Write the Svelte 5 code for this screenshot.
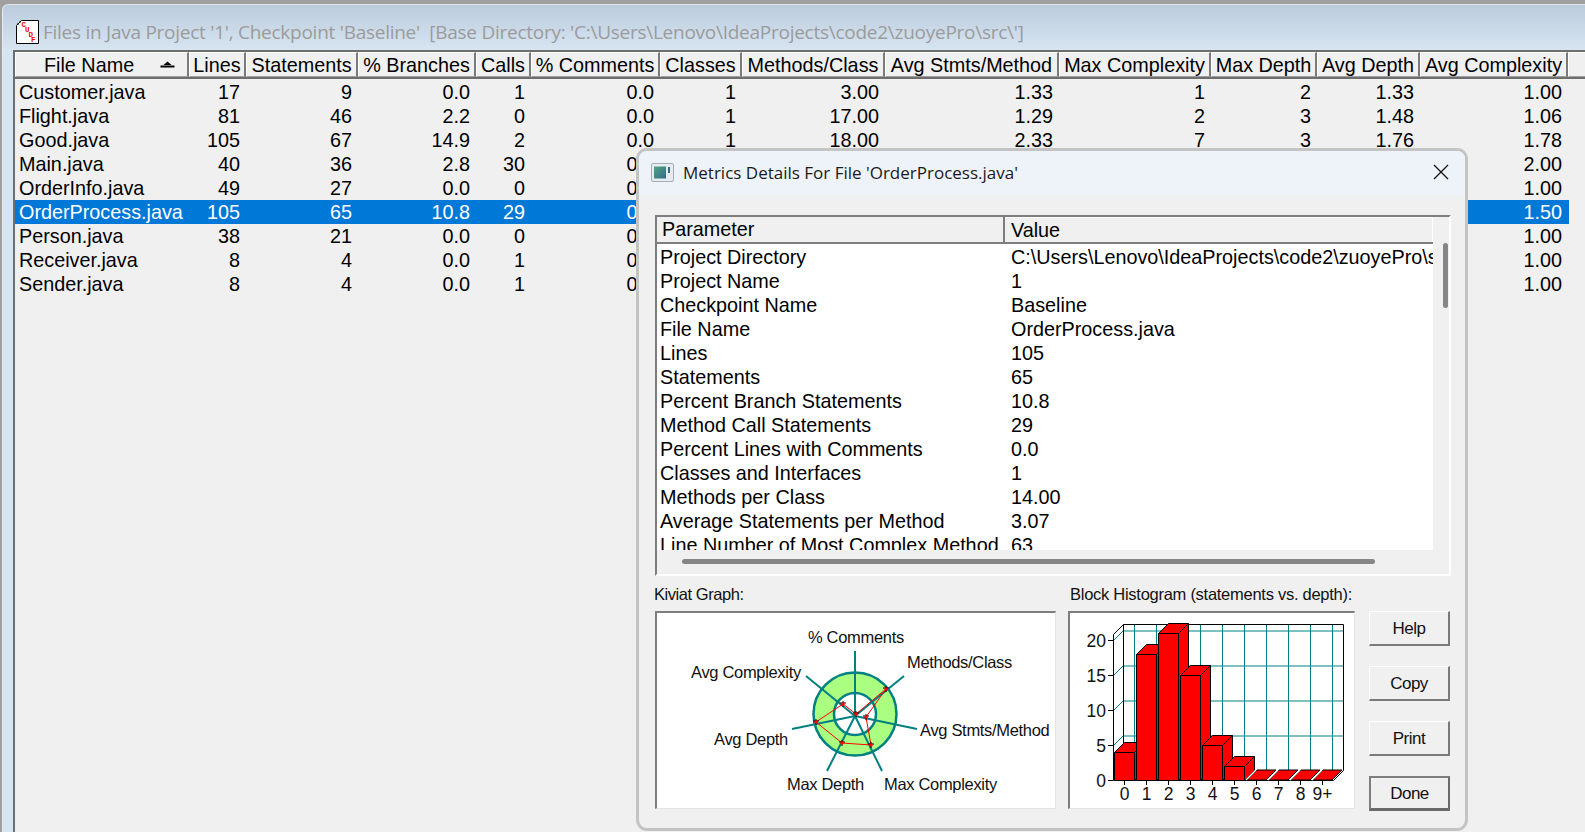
<script>
  const cols = [
    { name: 'File Name', w: 174 }, { name: 'Lines', w: 57 }, { name: 'Statements', w: 112 },
    { name: '% Branches', w: 118 }, { name: 'Calls', w: 55 }, { name: '% Comments', w: 129 },
    { name: 'Classes', w: 82 }, { name: 'Methods/Class', w: 143 }, { name: 'Avg Stmts/Method', w: 174 },
    { name: 'Max Complexity', w: 152 }, { name: 'Max Depth', w: 106 }, { name: 'Avg Depth', w: 103 },
    { name: 'Avg Complexity', w: 148 }
  ];
  const rows = [
    ['Customer.java','17','9','0.0','1','0.0','1','3.00','1.33','1','2','1.33','1.00'],
    ['Flight.java','81','46','2.2','0','0.0','1','17.00','1.29','2','3','1.48','1.06'],
    ['Good.java','105','67','14.9','2','0.0','1','18.00','2.33','7','3','1.76','1.78'],
    ['Main.java','40','36','2.8','30','0.0','','','','','','','2.00'],
    ['OrderInfo.java','49','27','0.0','0','0.0','','','','','','','1.00'],
    ['OrderProcess.java','105','65','10.8','29','0.0','','','','','','','1.50'],
    ['Person.java','38','21','0.0','0','0.0','','','','','','','1.00'],
    ['Receiver.java','8','4','0.0','1','0.0','','','','','','','1.00'],
    ['Sender.java','8','4','0.0','1','0.0','','','','','','','1.00']
  ];
  const params = [
    ['Project Directory','C:\\Users\\Lenovo\\IdeaProjects\\code2\\zuoyePro\\src\\'],
    ['Project Name','1'],['Checkpoint Name','Baseline'],['File Name','OrderProcess.java'],
    ['Lines','105'],['Statements','65'],['Percent Branch Statements','10.8'],
    ['Method Call Statements','29'],['Percent Lines with Comments','0.0'],
    ['Classes and Interfaces','1'],['Methods per Class','14.00'],
    ['Average Statements per Method','3.07'],['Line Number of Most Complex Method','63']
  ];
  const template = cols.map((c) => c.w + 'px').join(' ');

  const spokes = [[855,651],[904,676],[917,729],[882,771],[827,771],[792,729],[806,676]];
  const redPts = [[856,714],[886,689],[866,717],[871,745],[842,743],[816,722],[843,704]];
  const kivLabels = [
    ['% Comments',808,643],['Methods/Class',907,668],['Avg Stmts/Method',920,736],
    ['Max Complexity',884,790],['Max Depth',787,790],['Avg Depth',714,745],['Avg Complexity',691,678]
  ];
  const bars = [4,18,21,15,5,2,0,0,0,0];
  const barLabels = ['0','1','2','3','4','5','6','7','8','9+'];
  const X0 = 1114, STEP = 22, BW = 20, Y0 = 780, UNIT = 7, D = 10;
  const barData = bars.map((v, i) => {
    const x = X0 + i * STEP;
    return { v, x, top: Y0 - v * UNIT, label: barLabels[i] };
  });
  const yTicks = [0,5,10,15,20];
</script>

<div class="screen">
  <div class="window">
    <div class="titlebar">
      <svg class="fileicon" width="23" height="24" viewBox="0 0 23 24">
        <path d="M5.500 0.500H22.500V23.500H0.500V5.500Z" fill="#fff" stroke="#000" />
        <path d="M1 4H3M3 2H5" stroke="#000" />
        <text x="5.500" y="7" class="ic">C</text><text x="9" y="12" class="ic">U</text>
        <text x="12.500" y="17" class="ic">D</text><text x="15" y="22" class="ic">F</text>
      </svg>
      <span class="wintitle">Files in Java Project '1', Checkpoint 'Baseline'&nbsp; [Base Directory: 'C:\Users\Lenovo\IdeaProjects\code2\zuoyePro\src\']</span>
    </div>
    <div class="table">
      <div class="head">
        {#each cols as c, i}
          <div class="hcell" class:first={i === 0} style="width:{c.w}px">
            <span>{c.name}</span>
            {#if i === 0}
              <svg class="sort" width="15" height="7" viewBox="0 0 15 7"><path d="M3.500 4L7.500 0.500L11.500 4ZM0.500 4.500H14.500V6.500H0.500Z" fill="#000" /></svg>
            {/if}
          </div>
        {/each}
        <div class="hcell filler"></div>
      </div>
      {#each rows as r, ri}
        <div class="row" class:sel={ri === 5} style="grid-template-columns:{template}">
          {#each r as v, i}
            <div class="cell" class:name={i === 0}>{v}</div>
          {/each}
        </div>
      {/each}
    </div>
  </div>

  <section class="dialog">
    <header class="dtitle">
      <svg class="dicon" width="23" height="19" viewBox="0 0 23 19">
        <defs><linearGradient id="dg" x1="0" y1="0" x2="1" y2="1"><stop offset="0" stop-color="#4fa67f" /><stop offset="1" stop-color="#356a8c" /></linearGradient></defs>
        <rect x="0.500" y="0.500" width="22" height="18" rx="1.500" fill="#e8ecef" stroke="#a4adb4" />
        <rect x="3" y="3.500" width="12" height="12" fill="url(#dg)" />
        <rect x="17" y="4" width="2" height="6" fill="#356a7a" />
      </svg>
      <span class="dtext">Metrics Details For File 'OrderProcess.java'</span>
      <svg class="close" width="16" height="16" viewBox="0 0 16 16"><path d="M1 1L15 15M15 1L1 15" stroke="#111" stroke-width="1.300" fill="none" /></svg>
    </header>
    <div class="dbody">
      <div class="grid">
        <div class="ghead">
          <div class="gh gh1">Parameter</div>
          <div class="gh gh2">Value</div>
        </div>
        <div class="gmid">
          <div class="glist">
            {#each params as p}
              <div class="grow">
                <div class="gc1">{p[0]}</div>
                <div class="gc2">{p[1]}</div>
              </div>
            {/each}
          </div>
          <div class="vtrack"><div class="vthumb"></div></div>
        </div>
        <div class="htrack"><div class="hthumb"></div></div>
      </div>

      <div class="lower">
        <div class="panel kiv">
          <div class="cap">Kiviat Graph:</div>
          <div class="well">
            <svg width="398" height="195" viewBox="657 613 398 195">
              <circle cx="855" cy="714" r="41.500" fill="#aaff80" stroke="#008080" stroke-width="2.500" />
              <circle cx="855" cy="714" r="21" fill="#fff" stroke="#008080" stroke-width="2.500" />
              {#each spokes as s}
                <line x1="855" y1="716" x2={s[0]} y2={s[1]} stroke="#008080" stroke-width="2" />
              {/each}
              <polygon points={redPts.map((p) => p.join(',')).join(' ')} fill="none" stroke="#f00" stroke-width="1" />
              {#each redPts as p}
                <path d="M{p[0]-3} {p[1]-1}H{p[0]+3}M{p[0]} {p[1]-3}V{p[1]+3}" stroke="#000" stroke-width="1" />
                <circle cx={p[0]} cy={p[1]} r="1.800" fill="#f00" />
              {/each}
              {#each kivLabels as l}
                <text x={l[1]} y={l[2]} class="kl">{l[0]}</text>
              {/each}
            </svg>
          </div>
        </div>
        <div class="panel hist">
          <div class="cap">Block Histogram (statements vs. depth):</div>
          <div class="well">
            <svg width="284" height="195" viewBox="1070 613 284 195">
              {#each [631,666,701,736] as y}
                <line x1="1124" y1={y} x2="1343" y2={y} stroke="#008080" />
              {/each}
              {#each barData as b}
                <line x1={b.x + 20.500} y1="624" x2={b.x + 20.500} y2="770" stroke="#008080" />
              {/each}
              {#each [641,676,711,746] as y}
                <line x1="1113" y1={y} x2="1123" y2={y - 10} stroke="#008080" />
              {/each}
              <path d="M1113.500 634.500L1123.500 624.500H1343.500V770.500L1333.500 780.500M1113.500 634.500V780.500H1333.500M1123.500 624.500V770.500" fill="none" stroke="#000" />
              {#each yTicks as t}
                <line x1="1108" y1={780.5 - t * UNIT} x2="1113" y2={780.5 - t * UNIT} stroke="#000" />
                <text x="1106" y={787 - t * UNIT} class="al" text-anchor="end">{t}</text>
              {/each}
              {#each barData as b}
                <line x1={b.x + 10.500} y1="780" x2={b.x + 10.500} y2="785" stroke="#000" />
                <text x={b.x + 10.500} y="800" class="al" text-anchor="middle">{b.label}</text>
                {#if b.v > 0}
                  <path d="M{b.x + .5} {b.top + .5}L{b.x + D + .5} {b.top - D + .5}H{b.x + BW + D + .5}V{Y0 - D + .5}L{b.x + BW + .5} {Y0 + .5}V{b.top + .5}Z" fill="#f00" stroke="#000" />
                  <path d="M{b.x + BW + .5} {b.top + .5}L{b.x + BW + D + .5} {b.top - D + .5}" stroke="#000" />
                  <rect x={b.x + .5} y={b.top + .5} width={BW} height={Y0 - b.top} fill="#f00" stroke="#000" />
                {:else}
                  <polygon points="{b.x + 1},{Y0} {b.x + D + 1},{Y0 - D} {b.x + BW + D},{Y0 - D} {b.x + BW},{Y0}" fill="#f00" stroke="#000" />
                  <line x1={b.x} y1={Y0} x2={b.x + D} y2={Y0 - D} stroke="#fff" stroke-width="1.500" />
                {/if}
              {/each}
            </svg>
          </div>
        </div>
        <div class="buttons">
          <button>Help</button>
          <button>Copy</button>
          <button>Print</button>
          <button class="def">Done</button>
        </div>
      </div>
    </div>
  </section>
</div>

<style>
  :global(body) { margin: 0; background: #a0a0a0; overflow: hidden; }
  .screen {
    position: relative; width: 1585px; height: 832px; overflow: hidden;
    font-family: "Liberation Sans", Arial, sans-serif; color: #000; background: #a0a0a0;
  }
  .window {
    margin: 4px 0 0 2px; height: 828px; box-sizing: border-box; padding: 0 0 0 10px;
    border-radius: 6px 0 0 0; display: flex; flex-direction: column;
    background: linear-gradient(#bbcbdc, #d7e5f2 45px);
    border-top: 1px solid #dfe7ee; border-left: 1px solid #e6ecf1;
  }
  .titlebar { height: 45px; display: flex; align-items: flex-end; gap: 4px; padding: 0 0 6px 3px; box-sizing: border-box; flex: none; }
  .fileicon { display: block; flex: none; margin-bottom: 0; }
  .ic { font: bold 7.500px "Liberation Mono", monospace; fill: #f00; }
  .wintitle { font-family: "Open Sans", sans-serif; font-size: 19px; color: #9b9b9b; line-height: 24px; white-space: nowrap; letter-spacing: -0.260px; }
  .table {
    flex: 1; background: #f0f0f0; border-top: 2px solid #6e6e6e; border-left: 2px solid #6e6e6e;
    min-width: 0;
  }
  .head { display: flex; height: 25px; border-bottom: 2px solid #6e6e6e; margin-bottom: 1px; }
  .hcell {
    box-sizing: border-box; height: 25px; flex: none; background: #f0f0f0; border-left: 1px solid #fff; border-top: 1px solid #fff;
    border-right: 2px solid #7a7a7a; border-bottom: 1px solid #a0a0a0; display: flex; align-items: center; justify-content: center;
    position: relative; white-space: nowrap; font-size: 19.800px; line-height: 24px;
  }
  .hcell.filler { flex: 1; border-right: 0; }
  .sort { position: absolute; left: 144px; top: 8px; }
  .hcell.first { justify-content: flex-start; padding-left: 28px; }
  .row { display: grid; width: 1554px; height: 24px; font-size: 19.800px; line-height: 24px; }
  .row.sel { background: #0078d7; color: #fff; }
  .cell { text-align: right; padding-right: 6px; white-space: nowrap; }
  .cell.name { text-align: left; padding: 0 0 0 4px; }

  .dialog {
    position: absolute; left: 636px; top: 148px; width: 832px; height: 683px; box-sizing: border-box;
    border: 3px solid #c4c4c4; border-radius: 11px; background: #f0f0f0; overflow: hidden; display: flex; flex-direction: column;
  }
  .dtitle { height: 44px; flex: none; background: #eef3f9; display: flex; align-items: center; padding: 0 0 2px 12px; box-sizing: border-box; position: relative; }
  .dicon { flex: none; }
  .dtext { font-family: "Open Sans", sans-serif; font-size: 17px; color: #1a1a1a; margin-left: 9px; white-space: nowrap; }
  .close { margin-left: auto; margin-right: 16px; }
  .dbody { flex: 1; padding: 20px 14px 0 16px; display: flex; flex-direction: column; min-height: 0; }
  .grid {
    height: 361px; box-sizing: border-box; flex: none; display: flex; flex-direction: column;
    border-top: 2px solid #7e7e7e; border-left: 2px solid #7e7e7e; border-right: 2px solid #fff; border-bottom: 2px solid #fff;
  }
  .ghead { display: flex; height: 25px; flex: none; width: 776px; border-bottom: 2px solid #7e7e7e; box-sizing: content-box; }
  .gh { box-sizing: border-box; height: 25px; font-size: 19.800px; line-height: 25px; background: #f0f0f0; white-space: nowrap; }
  .gh1 { width: 348px; padding-left: 5px; border-right: 2px solid #7e7e7e; }
  .gh2 { flex: 1; padding-left: 6px; border-top: 1px solid #fff; border-right: 1px solid #fff; }
  .gmid { display: flex; height: 306px; flex: none; }
  .glist { width: 776px; background: #fff; overflow: hidden; flex: none; padding-top: 1px; box-sizing: border-box; }
  .grow { display: flex; height: 24px; font-size: 19.800px; line-height: 24px; white-space: nowrap; }
  .gc1 { width: 348px; padding-left: 3px; box-sizing: border-box; flex: none; overflow: hidden; }
  .gc2 { flex: 1; padding-left: 6px; overflow: hidden; }
  .vtrack { flex: 1; position: relative; }
  .vthumb { position: absolute; left: 10px; top: -1px; width: 5px; height: 65px; background: #868686; border-radius: 3px; }
  .htrack { flex: 1; position: relative; }
  .hthumb { position: absolute; left: 25px; top: 9px; width: 693px; height: 5px; background: #868686; border-radius: 3px; }
  .lower { display: flex; margin-top: 7px; align-items: flex-start; }
  .panel { flex: none; }
  .kiv { width: 413px; }
  .hist { width: 301px; }
  .cap { font-size: 16.500px; line-height: 22px; height: 28px; white-space: nowrap; color: #111; }
  .kiv .cap { letter-spacing: -0.450px; margin-left: -1px; }
  .hist .cap { letter-spacing: -0.270px; margin-left: 2px; }
  .well {
    box-sizing: border-box; border-top: 2px solid #7e7e7e; border-left: 2px solid #7e7e7e;
    border-right: 1px solid #e4e4e4; border-bottom: 1px solid #e4e4e4; background: #fff; height: 198px;
  }
  .kiv .well { width: 401px; }
  .hist .well { width: 287px; }
  .well svg { display: block; }
  .kl { font-size: 16.500px; letter-spacing: -0.320px; fill: #111; font-family: "Liberation Sans", Arial, sans-serif; }
  .al { font-size: 17.500px; fill: #111; font-family: "Liberation Sans", Arial, sans-serif; }
  .buttons { display: flex; flex-direction: column; gap: 20px; margin-top: 28px; flex: none; }
  button {
    width: 81px; height: 35px; box-sizing: border-box; background: #f0f0f0; font: 17px "Liberation Sans", Arial, sans-serif;
    letter-spacing: -0.500px; color: #111; padding: 2px 0 0; border-style: solid; border-width: 1px 2px 2px 1px;
    border-color: #fff #7a7a7a #7a7a7a #fff;
  }
  button.def { border: 2px solid #6a6a6a; border-top-color: #7e7e7e; border-left-color: #7e7e7e; border-bottom-width: 3px; }
</style>
